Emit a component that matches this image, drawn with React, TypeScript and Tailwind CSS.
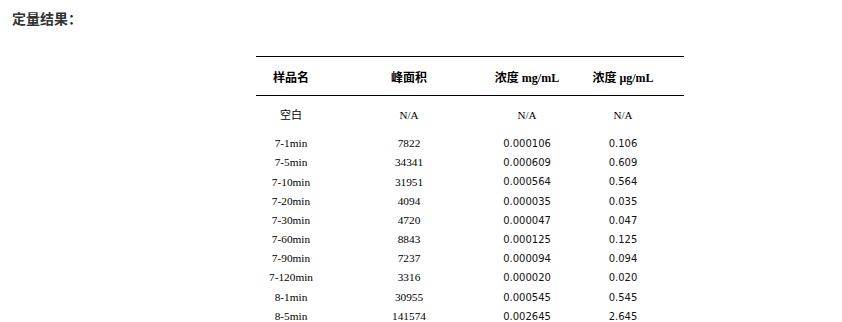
import React from "react";

const rows: [string, string, string, string][] = [
  ["7-1min", "7822", "0.000106", "0.106"],
  ["7-5min", "34341", "0.000609", "0.609"],
  ["7-10min", "31951", "0.000564", "0.564"],
  ["7-20min", "4094", "0.000035", "0.035"],
  ["7-30min", "4720", "0.000047", "0.047"],
  ["7-60min", "8843", "0.000125", "0.125"],
  ["7-90min", "7237", "0.000094", "0.094"],
  ["7-120min", "3316", "0.000020", "0.020"],
  ["8-1min", "30955", "0.000545", "0.545"],
  ["8-5min", "141574", "0.002645", "2.645"],
];

const serif = "font-['Liberation_Serif','Noto_Sans_CJK_SC',serif]";
const sans = "font-['DejaVu_Sans',sans-serif]";
const cols = "grid grid-cols-[70px_166px_70px_122px] text-center";

export default function App() {
  return (
    <div className="w-[842px] h-[322px] bg-white overflow-hidden text-black">
      <div className="pl-[12px] pt-[8px] h-[28px] text-[14px] leading-[20px] font-bold text-[#333] font-['Noto_Sans_CJK_SC',sans-serif]">
        定量结果：
      </div>
      <div className="ml-[256px] mt-[28px] w-[428px]">
        <div className={`${cols} ${serif} h-[40px] pt-[3px] items-center border-y border-black text-[12px] font-bold`}>
          <div>样品名</div>
          <div>峰面积</div>
          <div>浓度 mg/mL</div>
          <div>浓度 μg/mL</div>
        </div>
        <div className={`${cols} ${serif} h-[37px] pt-[1px] items-center text-[11px]`}>
          <div>空白</div>
          <div>N/A</div>
          <div>N/A</div>
          <div>N/A</div>
        </div>
        <div className="mt-[1px]">
          {rows.map((r) => (
            <div key={r[0]} className={`${cols} h-[19.2px] items-center`}>
              <div className={`${serif} text-[11.3px]`}>{r[0]}</div>
              <div className={`${serif} text-[11.3px]`}>{r[1]}</div>
              <div className={`${sans} text-[10px] text-[#111]`}>{r[2]}</div>
              <div className={`${sans} text-[10px] text-[#111]`}>{r[3]}</div>
            </div>
          ))}
        </div>
      </div>
    </div>
  );
}
